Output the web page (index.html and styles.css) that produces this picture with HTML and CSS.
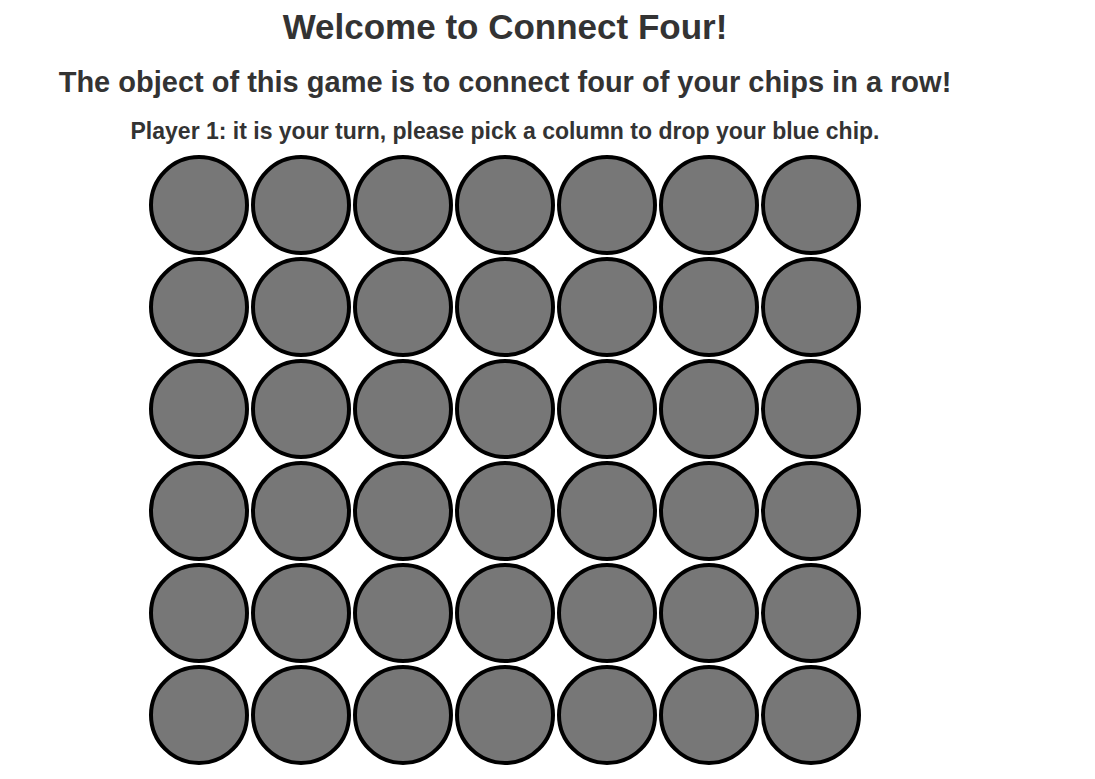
FILE: index.html
```html
<!DOCTYPE html>
<html lang="en">
<head>
<meta charset="utf-8">
<title>Connect Four</title>
<link rel="stylesheet" href="styles.css">
</head>
<body>
<div class="page">
  <h1 class="title">Welcome to Connect Four!</h1>
  <h2 class="subtitle">The object of this game is to connect four of your chips in a row!</h2>
  <p class="prompt">Player 1: it is your turn, please pick a column to drop your blue chip.</p>
  <div class="board">
    <div class="slot"></div><div class="slot"></div><div class="slot"></div><div class="slot"></div><div class="slot"></div><div class="slot"></div><div class="slot"></div>
    <div class="slot"></div><div class="slot"></div><div class="slot"></div><div class="slot"></div><div class="slot"></div><div class="slot"></div><div class="slot"></div>
    <div class="slot"></div><div class="slot"></div><div class="slot"></div><div class="slot"></div><div class="slot"></div><div class="slot"></div><div class="slot"></div>
    <div class="slot"></div><div class="slot"></div><div class="slot"></div><div class="slot"></div><div class="slot"></div><div class="slot"></div><div class="slot"></div>
    <div class="slot"></div><div class="slot"></div><div class="slot"></div><div class="slot"></div><div class="slot"></div><div class="slot"></div><div class="slot"></div>
    <div class="slot"></div><div class="slot"></div><div class="slot"></div><div class="slot"></div><div class="slot"></div><div class="slot"></div><div class="slot"></div>
  </div>
</div>
</body>
</html>
```

FILE: styles.css
```css
html, body {
  margin: 0;
  padding: 0;
  background: #ffffff;
}

body {
  font-family: "Liberation Sans", Arial, Helvetica, sans-serif;
  color: #333333;
}

.page {
  width: 994px;
  margin-left: 8px;
  padding-top: 7px;
  display: flex;
  flex-direction: column;
  align-items: center;
  text-align: center;
}

.title {
  margin: 0;
  font-size: 35px;
  line-height: 40px;
  font-weight: bold;
}

.subtitle {
  margin: 19px 0 0;
  font-size: 29px;
  line-height: 32px;
  font-weight: bold;
}

.prompt {
  margin: 20px 0 0;
  font-size: 23px;
  line-height: 26px;
  font-weight: bold;
}

.board {
  margin-top: 10px;
  display: grid;
  grid-template-columns: repeat(7, 102px);
  grid-auto-rows: 102px;
}

.slot {
  width: 92px;
  height: 92px;
  margin: 1px;
  border: 4px solid #000000;
  border-radius: 50%;
  background: #777777;
}
```
